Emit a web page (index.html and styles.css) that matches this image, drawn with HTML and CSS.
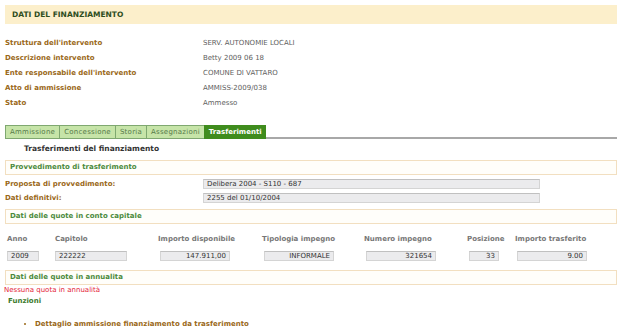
FILE: index.html
```html
<!DOCTYPE html>
<html lang="it">
<head>
  <meta charset="UTF-8" />
  <title>Dati del finanziamento</title>
  <link rel="stylesheet" href="styles.css">
</head>
<body>

  <div class="page">
    <div class="section-title">DATI DEL FINANZIAMENTO</div>

    <div class="info">
      <div class="info-row"><span class="label">Struttura dell'intervento</span><span class="value">SERV. AUTONOMIE LOCALI</span></div>
      <div class="info-row"><span class="label">Descrizione intervento</span><span class="value">Betty 2009 06 18</span></div>
      <div class="info-row"><span class="label">Ente responsabile dell'intervento</span><span class="value">COMUNE DI VATTARO</span></div>
      <div class="info-row"><span class="label">Atto di ammissione</span><span class="value">AMMISS-2009/038</span></div>
      <div class="info-row"><span class="label">Stato</span><span class="value">Ammesso</span></div>
    </div>

    <div class="tabs">
      <span class="tab">Ammissione</span>
      <span class="tab">Concessione</span>
      <span class="tab">Storia</span>
      <span class="tab">Assegnazioni</span>
      <span class="tab active">Trasferimenti</span>
      <span class="tab-line"></span>
    </div>

    <h3 class="subtitle">Trasferimenti del finanziamento</h3>

    <div class="box">Provvedimento di trasferimento</div>
    <div class="form">
      <div class="form-row">
        <span class="label">Proposta di provvedimento:</span>
        <span class="field wide">Delibera 2004 - S110 - 687</span>
      </div>
      <div class="form-row">
        <span class="label">Dati definitivi:</span>
        <span class="field wide">2255 del 01/10/2004</span>
      </div>
    </div>

    <div class="box">Dati delle quote in conto capitale</div>
    <div class="quotes">
      <span class="col-head">Anno</span>
      <span class="col-head">Capitolo</span>
      <span class="col-head">Importo disponibile</span>
      <span class="col-head">Tipologia impegno</span>
      <span class="col-head">Numero impegno</span>
      <span class="col-head">Posizione</span>
      <span class="col-head">Importo trasferito</span>

      <span class="field w-anno">2009</span>
      <span class="field w-cap">222222</span>
      <span class="field w-num right">147.911,00</span>
      <span class="field w-num right">INFORMALE</span>
      <span class="field w-num right">321654</span>
      <span class="field w-pos right">33</span>
      <span class="field w-num right">9.00</span>
    </div>

    <div class="box">Dati delle quote in annualita</div>
    <p class="error">Nessuna quota in annualità</p>
    <p class="functions">Funzioni</p>
    <ul class="links">
      <li>Dettaglio ammissione finanziamento da trasferimento</li>
    </ul>
  </div>

</body>
</html>
```

FILE: styles.css
```css
body {
  font-family: 'DejaVu Sans', Verdana, sans-serif;
  font-size: 7px;
  margin: 0;
  padding: 0;
  background: #fff;
  color: #555;
}

.page {
  padding: 5px 7px 0 5px;
}

.section-title {
  background: #fcefcb;
  color: #2e4d1c;
  font-weight: bold;
  font-size: 7.5px;
  height: 19px;
  line-height: 20px;
  padding-left: 7px;
}

.info {
  padding-top: 12px;
}

.info-row {
  display: grid;
  grid-template-columns: 198px 1fr;
  height: 15px;
  line-height: 15px;
}

.label {
  color: #9a6818;
  font-weight: bold;
}

.value {
  color: #606060;
}

/* tab bar */
.tabs {
  display: flex;
  align-items: flex-end;
  margin-top: 14px;
  height: 14px;
}

.tab {
  background: #c6e4a8;
  color: #567a48;
  border: 1px solid #7fa870;
  border-right: none;
  padding: 0 4px;
  height: 12px;
  line-height: 12px;
  letter-spacing: 0.25px;
}

.tab.active {
  background: #3f8c1d;
  color: #fff;
  font-weight: bold;
  letter-spacing: 0;
  border-color: #3f8c1d;
}

.tab-line {
  flex: 1;
  border-bottom: 2px solid #a8a8a8;
}

.subtitle {
  margin: 0;
  padding-left: 19px;
  font-size: 7.5px;
  color: #333;
  height: 21px;
  line-height: 19px;
}

.box {
  border: 1px solid #f2dfc0;
  background: #fffefa;
  color: #4b8a3c;
  font-weight: bold;
  height: 13px;
  line-height: 13px;
  padding-left: 4px;
}

.form {
  padding: 2px 0 4px;
}

.form-row {
  display: grid;
  grid-template-columns: 198px auto;
  align-items: center;
  height: 14px;
}

.field {
  background: #ebebed;
  border: 1px solid #d4d4d4;
  border-top-color: #c0c0c0;
  color: #333;
  height: 8px;
  line-height: 8px;
  padding: 0 3px;
  box-sizing: content-box;
}

.field.wide {
  width: 329px;
}

.quotes {
  display: grid;
  grid-template-columns: 48px 103px 104px 102px 103px 48px 90px;
  padding: 9px 0 9px 2px;
  row-gap: 6px;
}

.col-head {
  color: #777;
  font-weight: bold;
  height: 12px;
  line-height: 12px;
}

.w-anno { width: 24px; }
.w-cap { width: 64px; }
.w-num { width: 62px; margin-left: 2px; }
.w-pos { width: 22px; margin-left: 2px; }

.right {
  text-align: right;
}

.error {
  margin: 0;
  color: #e41c38;
  height: 11px;
  line-height: 11px;
  margin-left: -1px;
}

.functions {
  margin: 0;
  color: #3c7a2c;
  font-weight: bold;
  padding-left: 3px;
  height: 11px;
  line-height: 11px;
}

.links {
  margin: 13px 0 0;
  padding-left: 30px;
  color: #9a6818;
  font-weight: bold;
}
```
